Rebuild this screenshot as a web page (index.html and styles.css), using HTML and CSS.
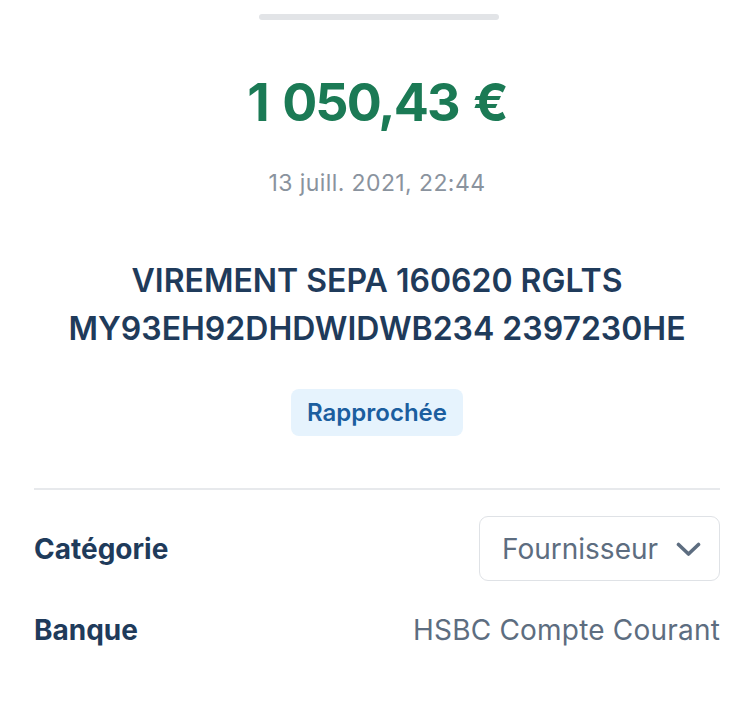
FILE: index.html
```html
<!DOCTYPE html>
<html lang="fr">
<head>
<meta charset="utf-8">
<link rel="stylesheet" href="styles.css">
</head>
<body>
<div class="sheet">
  <div class="handle"></div>
  <div class="amount">1 050,43 €</div>
  <div class="date">13 juill. 2021, 22:44</div>
  <div class="label">VIREMENT SEPA 160620 RGLTS<br>MY93EH92DHDWIDWB234 2397230HE</div>
  <div class="badge-wrap"><span class="badge">Rapprochée</span></div>
  <div class="divider"></div>
  <div class="row row-cat">
    <span class="key">Catégorie</span>
    <div class="select">
      <span>Fournisseur</span>
      <svg class="chev" width="25" height="15" viewBox="0 0 25 15"><path d="M2.5 2.5 L12.5 12 L22.5 2.5" fill="none" stroke="#5d6d80" stroke-width="3.6" stroke-linecap="round" stroke-linejoin="round"/></svg>
    </div>
  </div>
  <div class="row row-bank">
    <span class="key">Banque</span>
    <span class="val">HSBC Compte Courant</span>
  </div>
</div>
</body>
</html>
```
FILE: styles.css
```css
html, body {
  margin: 0;
  padding: 0;
  background: #ffffff;
}
body {
  font-family: Inter, "Noto Sans", sans-serif;
}
.sheet {
  padding: 14px 31px 0 34px;
  display: flex;
  flex-direction: column;
}
.handle {
  align-self: center;
  width: 240px;
  height: 6px;
  border-radius: 3px;
  background: #e2e4e7;
  margin-left: 4px;
}
.amount {
  margin-top: 53px;
  text-align: center;
  font-size: 52px;
  font-weight: 700;
  color: #1b7a55;
  line-height: 60px;
  letter-spacing: -1.9px;
  word-spacing: 4px;
}
.date {
  margin-top: 36px;
  text-align: center;
  font-size: 23px;
  color: #8a939e;
  line-height: 28px;
  letter-spacing: 0.4px;
}
.label {
  margin-top: 60px;
  text-align: center;
  font-size: 32px;
  font-weight: 600;
  color: #1f3b5b;
  line-height: 48px;
}
.badge-wrap {
  margin-top: 36px;
  display: flex;
  justify-content: center;
}
.badge {
  background: #e6f3fd;
  color: #1b5e9f;
  font-size: 24px;
  font-weight: 600;
  padding: 0 16px;
  height: 47px;
  line-height: 47px;
  border-radius: 8px;
}
.divider {
  margin-top: 52px;
  height: 2px;
  background: #e7e9ec;
}
.row {
  display: flex;
  justify-content: space-between;
  align-items: center;
}
.row-cat {
  margin-top: 26px;
}
.row-bank {
  margin-top: 33px;
  line-height: 33px;
}
.key {
  font-size: 28px;
  font-weight: 700;
  color: #1f3b5b;
}
.select {
  box-sizing: border-box;
  width: 241px;
  height: 65px;
  border: 1.5px solid #dfe2e6;
  border-radius: 9px;
  display: flex;
  align-items: center;
  gap: 16px;
  padding: 0 18px 0 22px;
  font-size: 28px;
  color: #5d6d80;
}
.chev {
  margin-left: auto;
  margin-top: 2px;
}
.val {
  font-size: 28px;
  color: #5d6d80;
  letter-spacing: 0.2px;
}
```
